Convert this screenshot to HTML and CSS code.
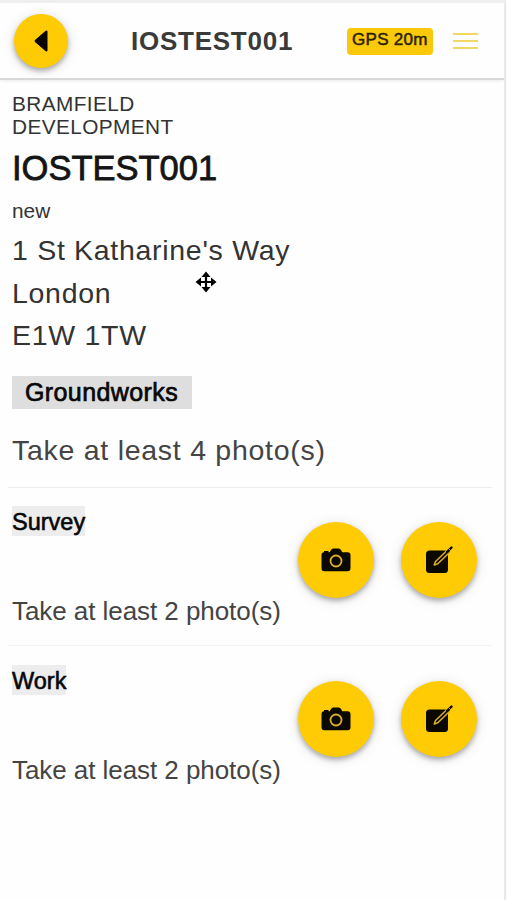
FILE: index.html
```html
<!DOCTYPE html>
<html lang="en">
<head>
<meta charset="utf-8">
<title>IOSTEST001</title>
<link rel="stylesheet" href="styles.css">
</head>
<body>
<svg class="defs" aria-hidden="true">
  <symbol id="camera" viewBox="0 0 30 24">
    <path fill="#0b0800" d="M3 4.300V3h4.500v1.300h1.200l1.300-2.300Q10.700.5 12.300.5h5.400q1.600 0 2.300 1.500l1.300 2.300H26.500q3 0 3 3v13q0 3-3 3H3.500q-3 0-3-3v-13q0-3 2.500-3z"/>
    <circle cx="15" cy="13" r="5.500" fill="none" stroke="#dcae2c" stroke-width="1.800"/>
  </symbol>
  <symbol id="edit" viewBox="0 0 30 30">
    <rect x="2" y="5.500" width="22" height="22.500" rx="3.500" fill="#0b0800"/>
    <path d="M24 4.500 11.500 16.500l-1.300 3.500 3.600-1.200L26 7" fill="#0b0800" stroke="#dcae2c" stroke-width="1.500" stroke-linejoin="round"/>
    <path d="M23 7 27.500 2.500" stroke="#0b0800" stroke-width="2.400" stroke-linecap="round"/>
    <path d="m24.500 3.500 2 2" stroke="#dcae2c" stroke-width=".9"/>
  </symbol>
</svg>
<div class="app">
  <header class="bar">
    <button class="round back" aria-label="Back"><svg width="14" height="22" viewBox="0 0 14 22"><path d="M13 1v20h-1L1 11.500v-1L12 1z" fill="#080500" stroke="#080500" stroke-linejoin="round"/></svg></button>
    <div class="bar-title">IOSTEST001</div>
    <div class="gps">GPS 20m</div>
    <button class="menu" aria-label="Menu"><i></i><i></i><i></i></button>
  </header>
  <main>
    <section class="job">
      <div class="client">BRAMFIELD<br>DEVELOPMENT</div>
      <h1>IOSTEST001</h1>
      <div class="status">new</div>
      <address>1 St Katharine's Way<br>London<br>E1W 1TW</address>
      <div class="phase">Groundworks</div>
      <p class="need">Take at least 4 photo(s)</p>
    </section>
    <section class="task">
      <div class="info"><h2>Survey</h2><p>Take at least 2 photo(s)</p></div>
      <div class="actions">
        <button class="round" aria-label="Take photo"><svg width="30" height="24"><use href="#camera"/></svg></button>
        <button class="round" aria-label="Edit"><svg width="30" height="30"><use href="#edit"/></svg></button>
      </div>
    </section>
    <section class="task">
      <div class="info"><h2>Work</h2><p>Take at least 2 photo(s)</p></div>
      <div class="actions">
        <button class="round" aria-label="Take photo"><svg width="30" height="24"><use href="#camera"/></svg></button>
        <button class="round" aria-label="Edit"><svg width="30" height="30"><use href="#edit"/></svg></button>
      </div>
    </section>
  </main>
  <svg class="cursor" width="22" height="22" viewBox="0 0 22 22"><path d="M11 3v16M3 11h16" stroke="#000" stroke-width="2.200"/><path d="M11 .5 15.500 6h-9zM11 21.500l4.500-5.500h-9zM.5 11 6 6.500v9zM21.500 11 16 6.500v9z"/></svg>
</div>
</body>
</html>
```

FILE: styles.css
```css
* { box-sizing: border-box; }
body {
  margin: 0;
  background: #fbfbfb;
  color: #333;
  font-family: "Liberation Sans", Arial, sans-serif;
}
h1, h2, p { margin: 0; }
button { border: 0; padding: 0; background: none; }
.defs { position: absolute; width: 0; height: 0; }
.app {
  position: relative;
  width: 506px;
  height: 900px;
  overflow: hidden;
  background: #fefefe;
  border-top: 3px solid #efefef;
  border-right: 2px solid #e9e9e9;
}
.bar {
  display: flex;
  align-items: center;
  height: 77px;
  padding-left: 14px;
  border-bottom: 2px solid #d8d8d8;
  box-shadow: 0 1px 3px rgba(0, 0, 0, .08);
}
.round {
  display: flex;
  flex: none;
  align-items: center;
  justify-content: center;
  width: 76px;
  height: 76px;
  border-radius: 50%;
  background: #fecb04;
  box-shadow: 0 3px 5px rgba(0, 0, 0, .28), 0 2px 14px rgba(0, 0, 0, .12);
}
.back { width: 54px; height: 54px; }
.bar-title {
  width: 215px;
  margin-left: 63px;
  font-size: 26px;
  font-weight: bold;
  letter-spacing: .75px;
  line-height: 30px;
  color: #3a3a3a;
}
.gps {
  width: 86px;
  height: 27px;
  margin: 1px 0 0 1px;
  padding-left: 5px;
  border-radius: 4px;
  background: #fbc90b;
  color: #2c2200;
  font-size: 17px;
  letter-spacing: .3px;
  line-height: 24px;
  white-space: nowrap;
  -webkit-text-stroke: .5px;
}
.menu {
  display: flex;
  flex-direction: column;
  gap: 5px;
  width: 25px;
  margin: 1px 0 0 20px;
}
.menu i { height: 2px; background: #f3d765; }
.job {
  height: 408px;
  margin: 0 12px 0 8px;
  padding: 12px 0 0 4px;
  border-bottom: 1px solid #ededed;
}
.client {
  font-size: 20.800px;
  letter-spacing: .4px;
  line-height: 23px;
}
h1 {
  margin-top: 9px;
  color: #151515;
  font-size: 34.500px;
  font-weight: normal;
  line-height: 42px;
  -webkit-text-stroke: .8px;
}
.status { margin-top: 10px; font-size: 20.800px; line-height: 24px; }
address {
  margin-top: 6px;
  font-size: 28.500px;
  font-style: normal;
  letter-spacing: .7px;
  line-height: 42.500px;
}
.phase {
  width: 180px;
  height: 33px;
  margin-top: 19px;
  padding-left: 13px;
  background: #dedede;
  color: #080808;
  font-size: 25px;
  letter-spacing: .4px;
  line-height: 33px;
  -webkit-text-stroke: .7px;
}
.need {
  margin-top: 21px;
  color: #444;
  font-size: 28.500px;
  letter-spacing: .73px;
  line-height: 40px;
}
.task {
  display: flex;
  justify-content: space-between;
  height: 158px;
  margin: 0 12px 0 8px;
  padding: 18px 15.500px 0 4px;
  border-bottom: 1px solid #f3f3f3;
}
.task:last-child { border: 0; padding-top: 19px; }
h2 {
  width: max-content;
  height: 30px;
  background: #ededed;
  color: #080808;
  font-size: 23.500px;
  font-weight: normal;
  line-height: 32px;
  -webkit-text-stroke: .6px;
}
.info p {
  margin-top: 60px;
  color: #444;
  font-size: 26px;
  letter-spacing: -.06px;
  line-height: 30px;
  white-space: nowrap;
}
.actions { display: flex; gap: 26.500px; padding-top: 16px; }
.cursor { position: absolute; left: 195px; top: 268px; }
```
